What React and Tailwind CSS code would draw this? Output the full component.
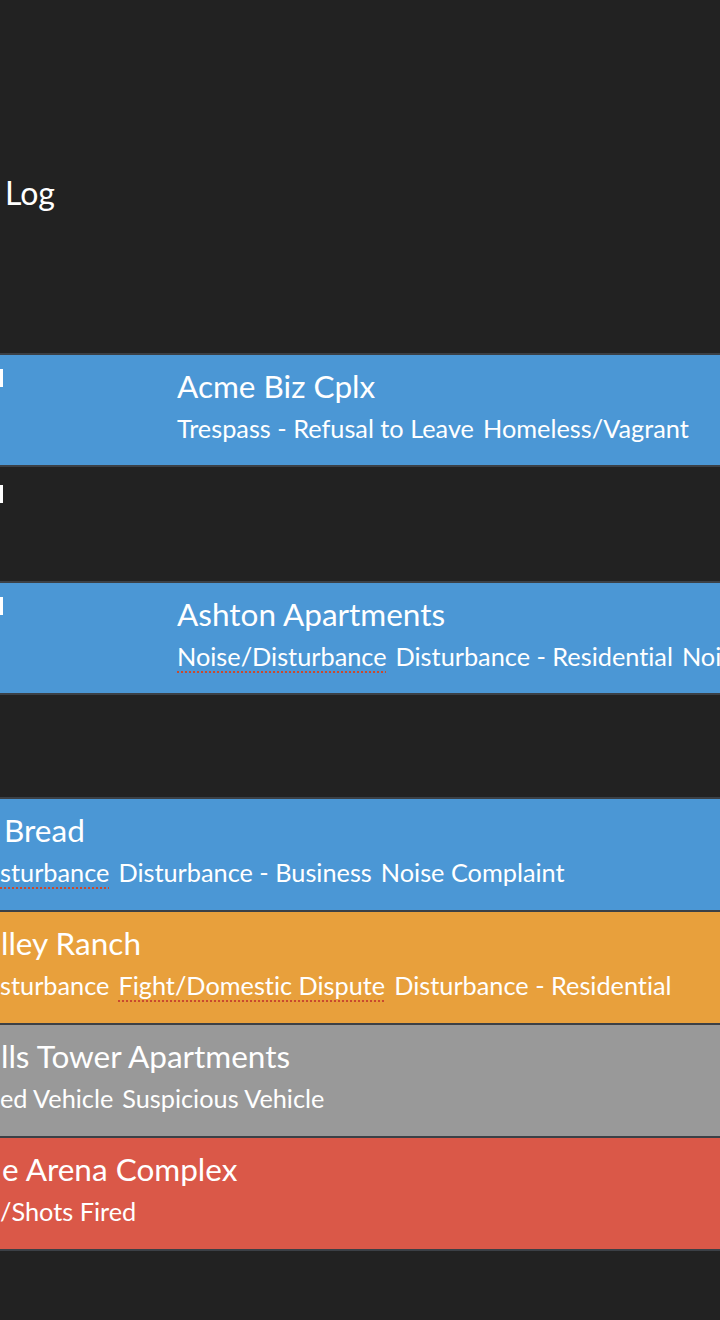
// App.jsx
// Incident log, horizontally scrolled: coloured rows by priority.

const Mark = () => <span className="block w-[3px] h-[18px] bg-white" />;

function Tags({ tags }) {
  return (
    <div className="flex gap-[9px] whitespace-nowrap text-[25.3px] leading-[32px] mt-[8px]">
      {tags.map((t, i) => (
        <span
          key={i}
          className={
            t.spell
              ? "underline decoration-dotted decoration-2 underline-offset-[5px] decoration-[#c94a2e]"
              : ""
          }
        >
          {t.text}
        </span>
      ))}
    </div>
  );
}

function PendingRow({ title, tags }) {
  return (
    <div className="h-[114px] box-border border-y-2 border-[#3b4046] bg-[#4b97d5] text-white overflow-hidden flex">
      <div className="w-[177px] shrink-0 pt-[14px]">
        <Mark />
      </div>
      <div className="min-w-0 pt-[13px]">
        <div className="text-[31.5px] leading-[36px] whitespace-nowrap">{title}</div>
        <Tags tags={tags} />
      </div>
    </div>
  );
}

function ActiveRow({ bg, title, titlePad, tags, last }) {
  return (
    <div
      className={`box-border border-t-2 ${last ? "h-[115px] border-b-2" : "h-[113px]"} border-[#3b4046] ${bg} text-white overflow-hidden pt-[13px]`}
    >
      <div className={`text-[31.5px] leading-[36px] whitespace-nowrap ${titlePad}`}>{title}</div>
      <Tags tags={tags} />
    </div>
  );
}

export default function App() {
  return (
    <div className="w-[720px] h-[1320px] bg-[#222222] overflow-hidden font-['Lato','Noto_Sans',sans-serif] [font-variant-ligatures:none]">
      {/* header */}
      <div className="h-[353px] pt-[173px] pl-[5px]">
        <h1 className="text-[32px] leading-[40px] text-white">Log</h1>
      </div>

      <PendingRow
        title="Acme Biz Cplx"
        tags={[{ text: "Trespass - Refusal to Leave" }, { text: "Homeless/Vagrant" }]}
      />

      <div className="h-[114px] pt-[18px]">
        <Mark />
      </div>

      <PendingRow
        title="Ashton Apartments"
        tags={[
          { text: "Noise/Disturbance", spell: true },
          { text: "Disturbance - Residential" },
          { text: "Noise Complaint" },
        ]}
      />

      <div className="h-[102px]" />

      <ActiveRow
        bg="bg-[#4b97d5]"
        title="Bread"
        titlePad="pl-[4px]"
        tags={[
          { text: "sturbance", spell: true },
          { text: "Disturbance - Business" },
          { text: "Noise Complaint" },
        ]}
      />
      <ActiveRow
        bg="bg-[#e8a03c]"
        title="lley Ranch"
        titlePad="pl-[1px]"
        tags={[
          { text: "sturbance" },
          { text: "Fight/Domestic Dispute", spell: true },
          { text: "Disturbance - Residential" },
        ]}
      />
      <ActiveRow
        bg="bg-[#999999]"
        title="lls Tower Apartments"
        titlePad="pl-[1px]"
        tags={[{ text: "ed Vehicle" }, { text: "Suspicious Vehicle" }]}
      />
      <ActiveRow
        bg="bg-[#da5848]"
        title="e Arena Complex"
        titlePad="pl-[2px]"
        tags={[{ text: "/Shots Fired" }]}
        last
      />
    </div>
  );
}
